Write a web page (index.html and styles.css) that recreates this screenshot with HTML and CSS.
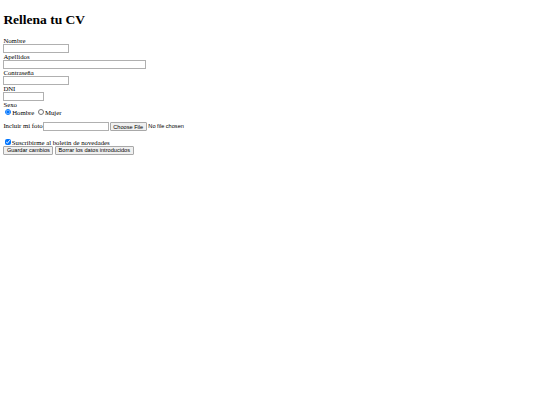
FILE: index.html
```html
<!DOCTYPE html>
<html lang="es">
<head>
<meta charset="utf-8">
<title>Rellena tu CV</title>
<link rel="stylesheet" href="styles.css">
</head>
<body class="pagina">
<h1 class="titulo">Rellena tu CV</h1>
<form class="formulario">
Nombre<br>
<input type="text" class="campo"><br>
Apellidos<br>
<input type="text" class="campo campo-largo"><br>
Contraseña<br>
<input type="password" class="campo"><br>
DNI<br>
<input type="text" class="campo campo-corto"><br>
Sexo<br>
<input type="radio" class="opcion" name="sexo" checked>Hombre
<input type="radio" class="opcion" name="sexo">Mujer
<p class="bloque">Incluir mi foto<input type="text" class="campo"><input type="file" class="archivo"></p>
<p class="bloque"><input type="checkbox" class="casilla" checked>Suscribirme al boletín de novedades<br>
<button type="button" class="boton">Guardar cambios</button>
<button type="button" class="boton">Borrar los datos introducidos</button></p>
</form>
</body>
</html>
```
FILE: styles.css
```css
.pagina {
  margin: 3.375px;
  font-family: "Liberation Serif", "Times New Roman", serif;
  font-size: 6.75px;
  color: #000;
  background: #fff;
}
.titulo {
  font-size: 13.5px;
  margin: 0.67em 0;
}
.bloque {
  margin: 1em 0;
}
.campo {
  box-sizing: border-box;
  width: 65.8px;
  height: 8.86px;
  margin: 0;
  padding: 0 1px;
  border: 1px solid #b0b0b0;
  font-family: "Liberation Sans", Arial, sans-serif;
  font-size: 5.625px;
  vertical-align: baseline;
}
.campo-largo {
  width: 142.2px;
}
.campo-corto {
  width: 40.9px;
}
.opcion {
  width: 5.5px;
  height: 5.5px;
  margin: 1.27px 1.27px 0 2.1px;
}
.casilla {
  width: 5.5px;
  height: 5.5px;
  margin: 1.27px 1.27px 1.27px 1.7px;
}
.archivo {
  font-family: "Liberation Sans", Arial, sans-serif;
  font-size: 5.625px;
  margin: 0 0 0 1.2px;
}
.archivo::file-selector-button {
  font: inherit;
  margin-right: 1.7px;
  padding: 0.4px 2.5px;
  border: 1px solid #a8a8a8;
  border-radius: 1px;
  background: #f0f0f0;
  color: #000;
}
.boton {
  font-family: "Liberation Sans", Arial, sans-serif;
  font-size: 5.625px;
  margin: 0;
  padding: 0.4px 2.5px;
  border: 1px solid #a8a8a8;
  border-radius: 1px;
  background: #f0f0f0;
  color: #000;
}
```
